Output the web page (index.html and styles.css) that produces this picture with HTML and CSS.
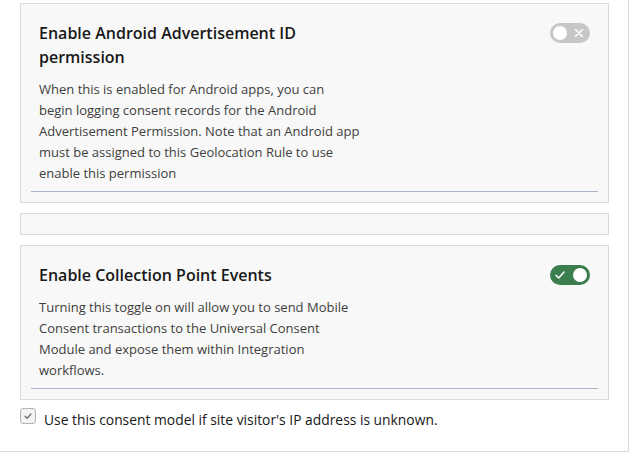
FILE: index.html
```html
<!DOCTYPE html>
<html lang="en">
<head>
<meta charset="utf-8">
<title>Consent settings</title>
<link rel="stylesheet" href="styles.css">
</head>
<body>
<div class="panel">
  <section class="card">
    <div class="card-body">
      <div class="text">
        <h3 class="title">Enable Android Advertisement ID permission</h3>
        <p class="desc">When this is enabled for Android apps, you can begin logging consent records for the Android Advertisement Permission. Note that an Android app must be assigned to this Geolocation Rule to use enable this permission</p>
      </div>
      <span class="toggle toggle-off" role="switch" aria-checked="false">
        <span class="knob"></span>
        <svg class="tg-icon" width="10" height="10" viewBox="0 0 10 10"><path d="M1.5 1.5 L8.5 8.5 M8.5 1.5 L1.5 8.5" stroke="#fff" stroke-width="1.5" stroke-linecap="round" fill="none"/></svg>
      </span>
    </div>
  </section>

  <section class="card card-empty"></section>

  <section class="card">
    <div class="card-body">
      <div class="text">
        <h3 class="title">Enable Collection Point Events</h3>
        <p class="desc">Turning this toggle on will allow you to send Mobile Consent transactions to the Universal Consent Module and expose them within Integration workflows.</p>
      </div>
      <span class="toggle toggle-on" role="switch" aria-checked="true">
        <svg class="tg-icon" width="10" height="10" viewBox="0 0 10 10"><path d="M1 5.4 L3.7 8 L9 2" stroke="#fff" stroke-width="1.5" stroke-linecap="round" stroke-linejoin="round" fill="none"/></svg>
        <span class="knob"></span>
      </span>
    </div>
  </section>

  <label class="check">
    <span class="box">
      <svg width="10" height="10" viewBox="0 0 10 10"><path d="M2 5.2 L4.2 7.2 L8 3" stroke="#706e6b" stroke-width="1.3" stroke-linecap="round" stroke-linejoin="round" fill="none"/></svg>
    </span>
    <span class="check-label">Use this consent model if site visitor's IP address is unknown.</span>
  </label>
</div>
</body>
</html>
```

FILE: styles.css
```css
* { box-sizing: border-box; }

html, body {
  margin: 0;
  padding: 0;
  background: #ffffff;
}

body {
  font-family: "Open Sans", "Noto Sans", sans-serif;
  color: #181818;
}

.panel {
  width: 629px;
  height: 452px;
  padding: 3px 19px 0 20px;
  border-right: 1px solid #dddbda;
  border-bottom: 1px solid #dddbda;
  display: flex;
  flex-direction: column;
  gap: 10px;
}

.card {
  background: #f8f8f8;
  border: 1px solid #dddbda;
  padding: 0 10px;
}

.card-empty {
  height: 22px;
}

.card-body {
  display: flex;
  justify-content: space-between;
  align-items: flex-start;
  padding: 17px 8px 7px;
  margin-bottom: 10px;
  border-bottom: 1px solid #a9b6c6;
}

.text {
  width: 322px;
}

.title {
  margin: 0;
  font-size: 16px;
  line-height: 24px;
  font-weight: 600;
  color: #181818;
}

.desc {
  margin: 10px 0 0;
  font-size: 13px;
  line-height: 21px;
  color: #3e3e3c;
}

.toggle {
  margin-top: 2px;
  width: 40px;
  height: 20px;
  border-radius: 10px;
  display: flex;
  align-items: center;
  justify-content: space-between;
  padding: 0 3px;
}

.toggle-off {
  background: #c9c7c5;
}

.toggle-on {
  background: #3b7d4c;
  padding-left: 5px;
}

.toggle-off .tg-icon {
  margin-right: 3px;
}

.knob {
  width: 14px;
  height: 14px;
  border-radius: 50%;
  background: #ffffff;
}

.check {
  margin-top: -2px;
  display: flex;
  align-items: flex-start;
  gap: 8px;
}

.box {
  width: 16px;
  height: 16px;
  border: 1px solid #b8b6b4;
  border-radius: 3px;
  background: #f3f3f3;
  display: flex;
  align-items: center;
  justify-content: center;
}

.check-label {
  font-size: 13.85px;
  line-height: 24px;
  color: #181818;
}
```
